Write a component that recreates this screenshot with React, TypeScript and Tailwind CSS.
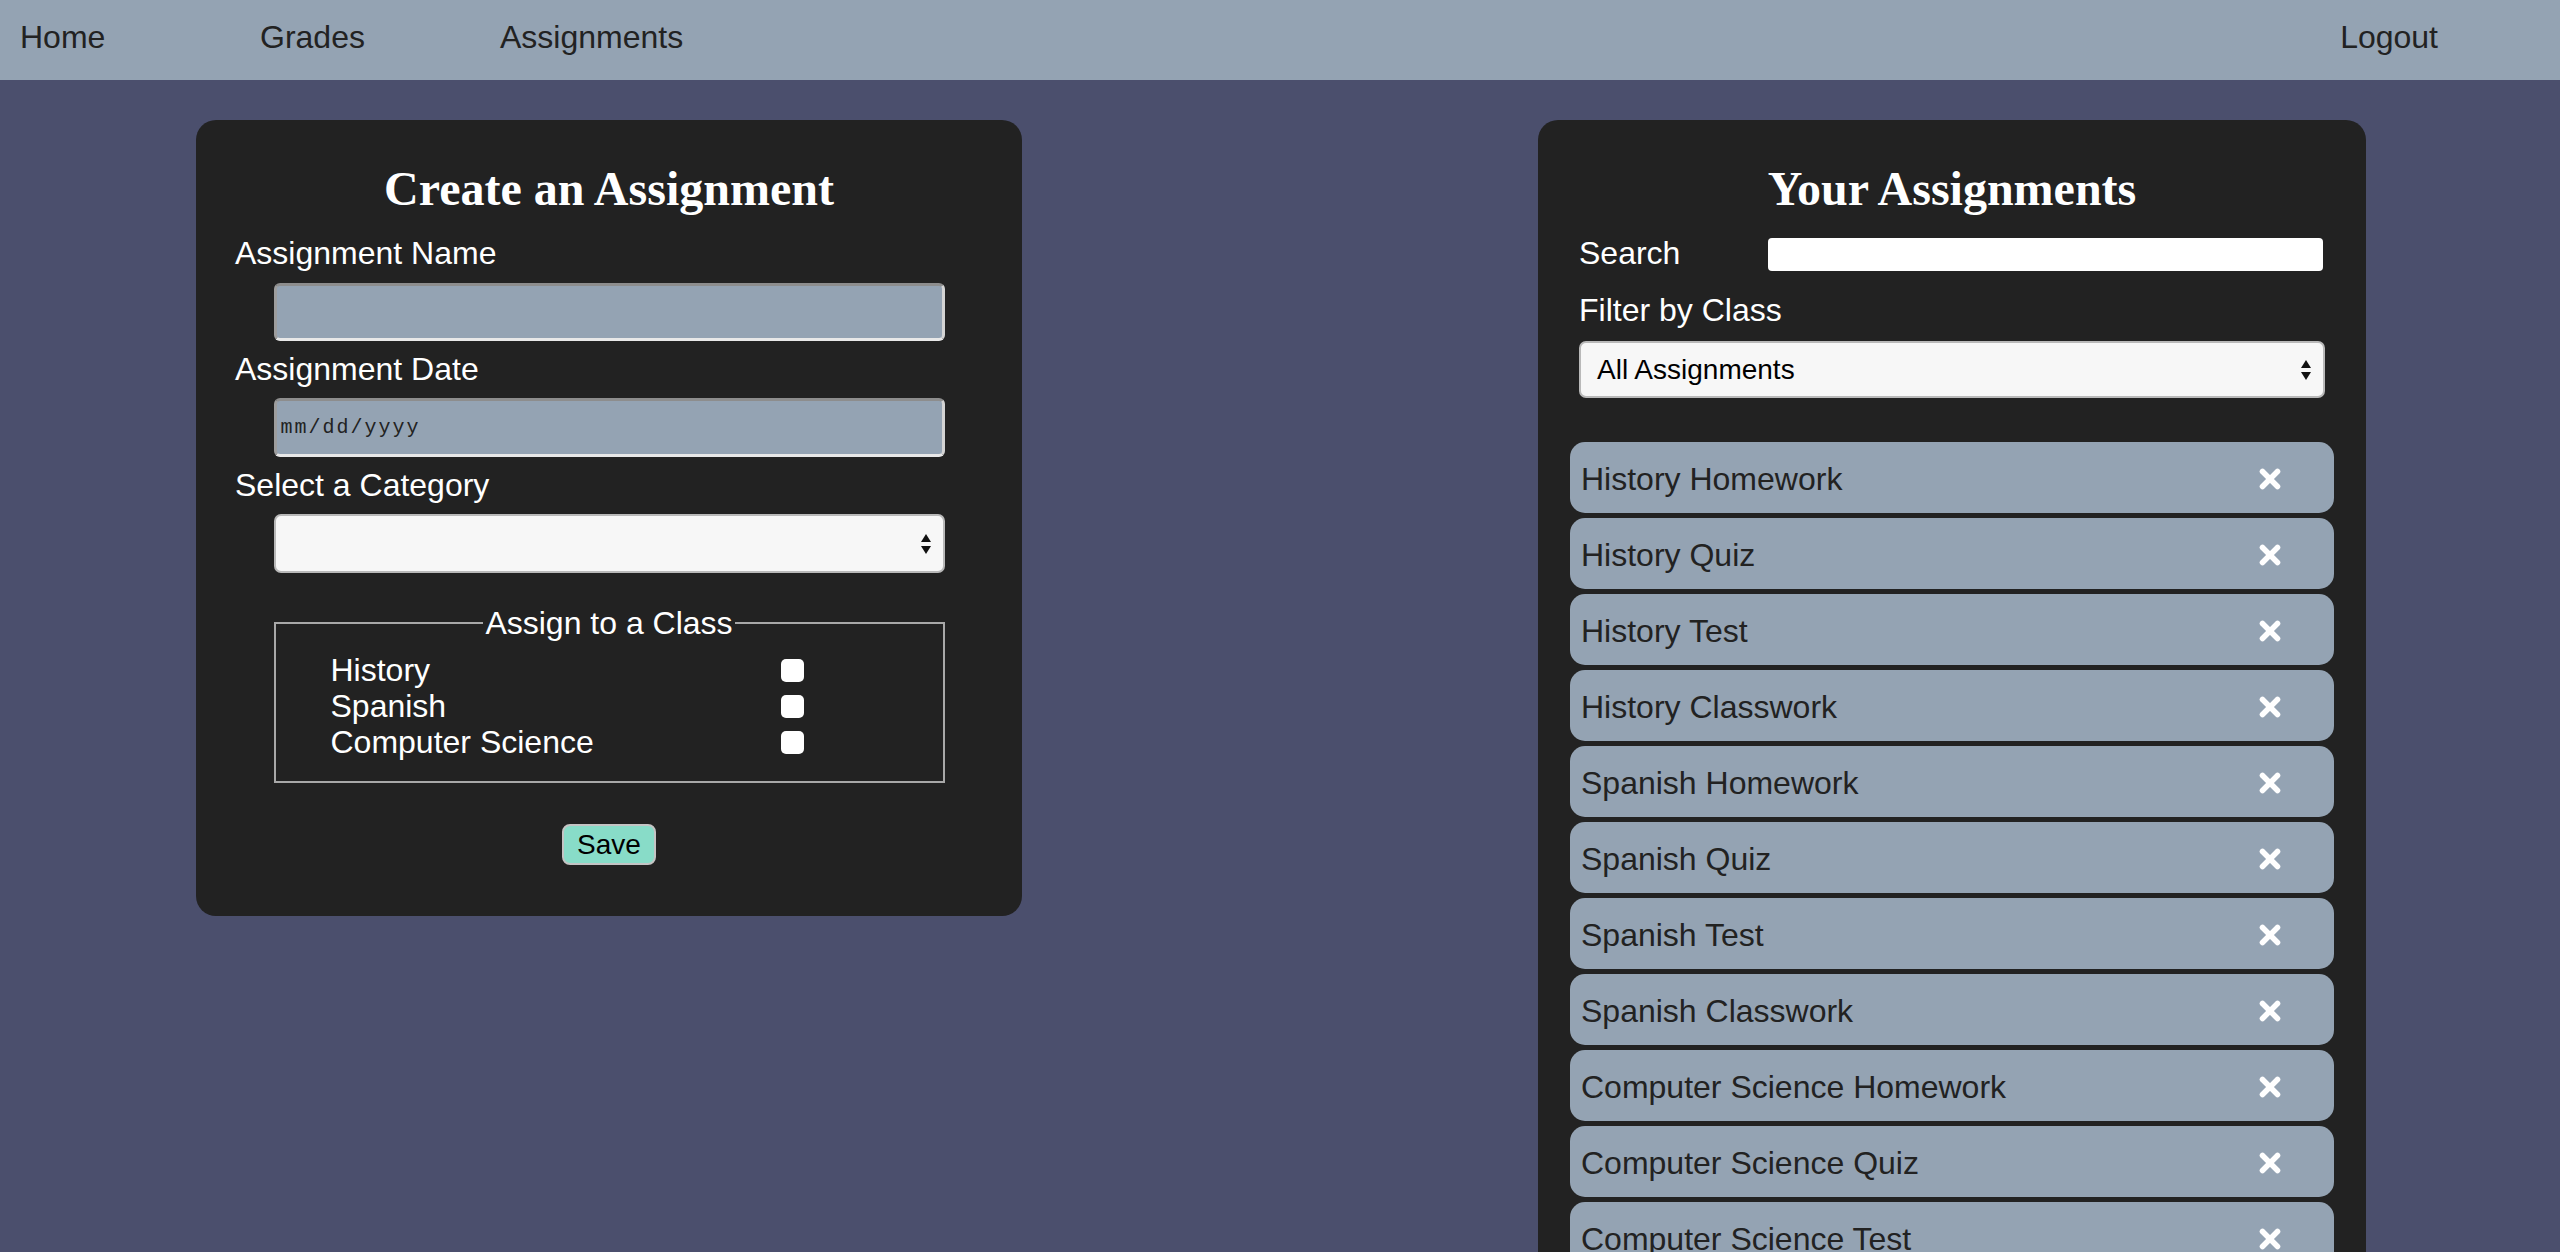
import React from "react";

const items = [
  "History Homework",
  "History Quiz",
  "History Test",
  "History Classwork",
  "Spanish Homework",
  "Spanish Quiz",
  "Spanish Test",
  "Spanish Classwork",
  "Computer Science Homework",
  "Computer Science Quiz",
  "Computer Science Test",
  "Computer Science Classwork",
];

function Arrows() {
  return (
    <svg width="10" height="22" viewBox="0 0 10 22" className="absolute right-[12px] top-1/2 -translate-y-1/2">
      <polygon points="0,9 5,1 10,9" fill="#111" />
      <polygon points="0,13 10,13 5,21" fill="#111" />
    </svg>
  );
}

function XIcon() {
  return (
    <svg width="22" height="22" viewBox="0 0 22 22">
      <line x1="3.5" y1="3.5" x2="18.5" y2="18.5" stroke="white" strokeWidth="5.5" strokeLinecap="round" />
      <line x1="18.5" y1="3.5" x2="3.5" y2="18.5" stroke="white" strokeWidth="5.5" strokeLinecap="round" />
    </svg>
  );
}

export default function App() {
  const inputCls =
    "mx-auto w-[671px] rounded-[6px] bg-[#94a3b3] border-[3px] border-t-[#8d8d8d] border-l-[#9d9d9d] border-b-[#e8e8e8] border-r-[#d4d4d4]";
  return (
    <div className="h-screen overflow-hidden bg-[#4b4f6d] font-['Liberation_Sans',Arial,sans-serif]">
      <nav className="h-[80px] bg-[#94a3b3] flex items-start pt-[19px] text-[32px] leading-[36px] text-[#222]">
        <a className="block w-[260px] pl-5">Home</a>
        <a className="block w-[240px]">Grades</a>
        <a className="block w-[240px]">Assignments</a>
        <a className="block ml-auto mr-[122px]">Logout</a>
      </nav>
      <main className="flex justify-between items-start pl-[196px] pr-[194px] pt-[40px]">
        {/* Left card */}
        <section className="w-[826px] bg-[#222222] rounded-[20px] pt-[41px] pb-[51px] px-[39px] text-white">
          <h1 className="text-center text-[48px] leading-[56px] font-bold font-['Liberation_Serif','Times_New_Roman',serif]">
            Create an Assignment
          </h1>
          <div className="mt-[18px] text-[32px] leading-[36px]">Assignment Name</div>
          <div className={`mt-[12px] h-[58px] ${inputCls}`} />
          <div className="mt-[10px] text-[32px] leading-[36px]">Assignment Date</div>
          <div className={`mt-[11px] h-[59px] flex items-center pl-[4px] ${inputCls}`}>
            <span className="font-['Liberation_Mono','Courier_New',monospace] text-[20px] tracking-[2px] text-[#222]">
              mm/dd/yyyy
            </span>
          </div>
          <div className="mt-[10px] text-[32px] leading-[36px]">Select a Category</div>
          <div className="relative mt-[11px] mx-auto w-[671px] h-[59px] rounded-[7px] bg-[#f7f7f7] border-2 border-[#b9b9b9]">
            <Arrows />
          </div>
          <fieldset className="mt-[32px] mx-auto w-[671px] border-2 border-[#a8a8a8] pt-[11px] pb-[21px]">
            <legend className="mx-auto px-[2px] text-[32px] leading-[36px]">Assign to a Class</legend>
            {["History", "Spanish", "Computer Science"].map((c) => (
              <div key={c} className="flex items-center h-[36px] pl-[55px]">
                <span className="w-[450px] text-[32px] leading-[36px]">{c}</span>
                <span className="block w-[23px] h-[23px] bg-white rounded-[5px]" />
              </div>
            ))}
          </fieldset>
          <button className="mt-[41px] mx-auto flex items-center justify-center w-[94px] h-[41px] bg-[#88dcc8] border-2 border-[#c4c4c4] rounded-[8px] text-[28px] leading-none text-black">
            Save
          </button>
        </section>

        {/* Right card */}
        <section className="w-[828px] bg-[#222222] rounded-[20px] pt-[41px] pb-[40px] px-[32px] text-white">
          <h1 className="text-center text-[48px] leading-[56px] font-bold font-['Liberation_Serif','Times_New_Roman',serif]">
            Your Assignments
          </h1>
          <div className="mt-[18px] flex items-center px-[9px]">
            <span className="w-[189px] text-[32px] leading-[36px]">Search</span>
            <div className="flex-1 h-[33px] bg-white rounded-[4px] mr-[2px] mt-[2px]" />
          </div>
          <div className="mt-[21px] px-[9px] text-[32px] leading-[36px]">Filter by Class</div>
          <div className="relative mt-[13px] mx-[9px] h-[57px] rounded-[7px] bg-[#f7f7f7] border-2 border-[#b9b9b9] flex items-center pl-[16px]">
            <span className="text-[28px] text-black">All Assignments</span>
            <Arrows />
          </div>
          <ul className="mt-[44px] flex flex-col gap-[5px]">
            {items.map((it) => (
              <li
                key={it}
                className="h-[71px] rounded-[15px] bg-[#94a3b3] flex items-center justify-between pl-[11px] pr-[53px] pt-[2px] text-[32px] text-[#222]"
              >
                <span>{it}</span>
                <XIcon />
              </li>
            ))}
          </ul>
        </section>
      </main>
    </div>
  );
}
